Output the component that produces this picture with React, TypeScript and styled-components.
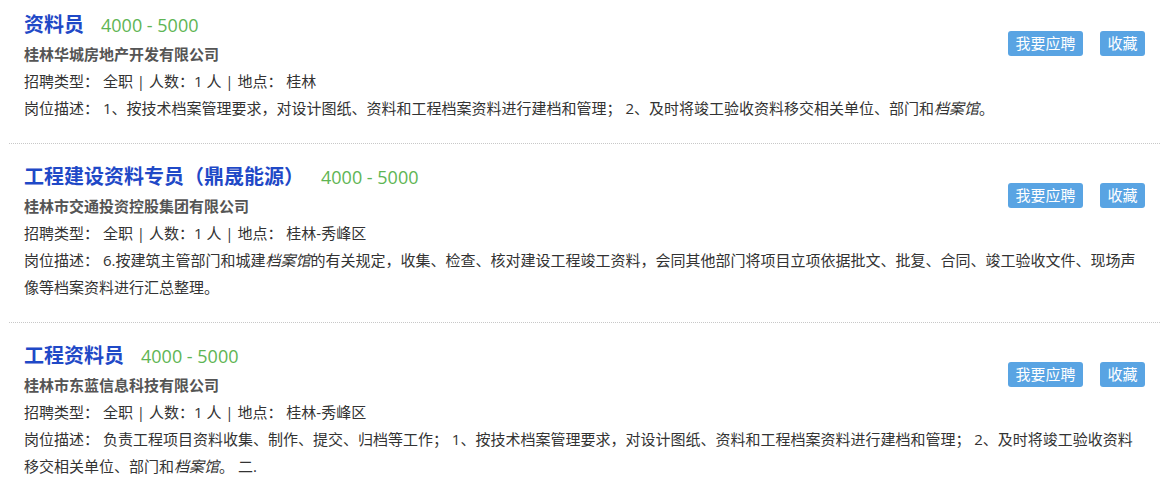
import React from 'react'
import styled, { createGlobalStyle } from 'styled-components'

const GlobalStyle = createGlobalStyle`
	html, body {
		margin: 0;
		padding: 0;
		background: #fff;
	}
	body {
		font-family: 'Open Sans', 'Noto Sans CJK SC', sans-serif;
		font-size: 15px;
		color: #333;
	}
`

const List = styled.ul`
	list-style: none;
	margin: 0 6px 0 9px;
	padding: 0;
`

const Card = styled.li<{ $first?: boolean; $last?: boolean }>`
	padding: ${props => (props.$first ? '9px' : '17px')} 15px 21px;
	border-bottom: ${props => (props.$last ? 'none' : '1px dotted #c8c8c8')};
`

const Head = styled.div`
	display: flex;
	justify-content: space-between;
	align-items: flex-start;
`

const Info = styled.div`
	display: flex;
	flex-direction: column;
`

const TitleRow = styled.div`
	display: flex;
	align-items: baseline;
	height: 32px;
	line-height: 32px;

	h3 {
		margin: 0;
		font-size: 20px;
		font-weight: bold;
		color: #1f49c7;
	}

	span {
		margin-left: 17px;
		font-size: 18px;
		color: #5eb554;
	}
`

const Line = styled.p<{ $bold?: boolean }>`
	margin: 0;
	line-height: 27px;
	font-size: 15px;
	font-weight: ${props => (props.$bold ? 'bold' : 'normal')};
	color: ${props => (props.$bold ? '#555' : '#333')};

	em {
		font-style: italic;
	}
`

const Actions = styled.div`
	display: flex;
	gap: 17px;
	padding-top: 22px;
`

const Button = styled.button`
	height: 25px;
	padding: 0 7.5px;
	border: none;
	border-radius: 3px;
	background: #59a4e3;
	color: #fff;
	font-family: inherit;
	font-size: 15px;
	line-height: 25px;
	cursor: pointer;
`

type Job = {
	title: string
	salary: string
	company: string
	place: string
	desc: React.ReactNode
}

const jobs: Job[] = [
	{
		title: '资料员',
		salary: '4000 - 5000',
		company: '桂林华城房地产开发有限公司',
		place: '桂林',
		desc: (
			<>
				1、按技术档案管理要求，对设计图纸、资料和工程档案资料进行建档和管理； 2、及时将竣工验收资料移交相关单位、部门和<em>档案馆</em>。
			</>
		),
	},
	{
		title: '工程建设资料专员（鼎晟能源）',
		salary: '4000 - 5000',
		company: '桂林市交通投资控股集团有限公司',
		place: '桂林-秀峰区',
		desc: (
			<>
				6.按建筑主管部门和城建<em>档案馆</em>的有关规定，收集、检查、核对建设工程竣工资料，会同其他部门将项目立项依据批文、批复、合同、竣工验收文件、现场声像等档案资料进行汇总整理。
			</>
		),
	},
	{
		title: '工程资料员',
		salary: '4000 - 5000',
		company: '桂林市东蓝信息科技有限公司',
		place: '桂林-秀峰区',
		desc: (
			<>
				负责工程项目资料收集、制作、提交、归档等工作； 1、按技术档案管理要求，对设计图纸、资料和工程档案资料进行建档和管理； 2、及时将竣工验收资料移交相关单位、部门和<em>档案馆</em>。 二.
			</>
		),
	},
]

function App() {
	return (
		<>
			<GlobalStyle />
			<List>
				{jobs.map((job, i) => (
					<Card key={i} $first={i === 0} $last={i === jobs.length - 1}>
						<Head>
							<Info>
								<TitleRow>
									<h3>{job.title}</h3>
									<span>{job.salary}</span>
								</TitleRow>
								<Line $bold>{job.company}</Line>
								<Line>招聘类型： 全职 | 人数：1 人 | 地点： {job.place}</Line>
							</Info>
							<Actions>
								<Button>我要应聘</Button>
								<Button>收藏</Button>
							</Actions>
						</Head>
						<Line>岗位描述： {job.desc}</Line>
					</Card>
				))}
			</List>
		</>
	)
}

export default App
